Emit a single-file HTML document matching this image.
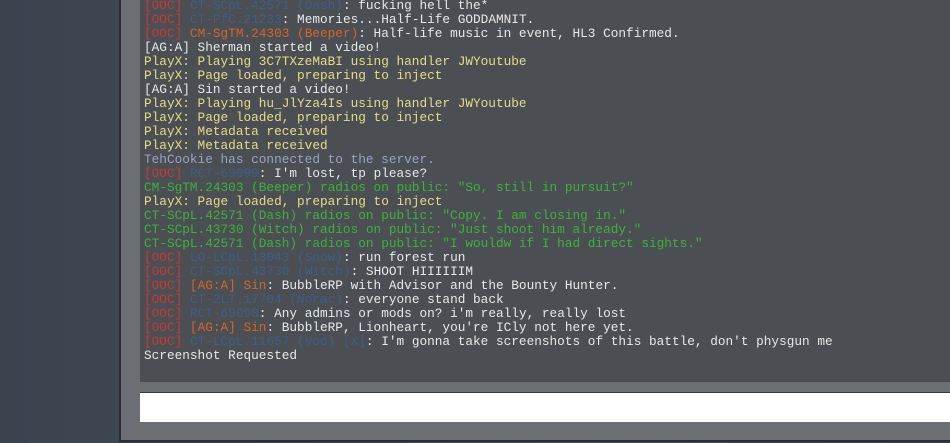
<!DOCTYPE html>
<html><head><style>
body{margin:0;width:950px;height:443px;overflow:hidden;background:#3f4954;position:relative;font-family:"Liberation Mono",monospace;}
.bg{position:absolute;inset:0;background:linear-gradient(90deg,#3a444f,#44505b 60%,#3e4853);}
.panel{position:absolute;left:119px;top:-2px;width:840px;height:440px;background:#6b6f73;border:2px solid #2a2e32;border-right:none;}
.chat{position:absolute;left:140px;top:0;width:810px;height:382px;background:#4b4e52;}
.input{position:absolute;left:140px;top:392px;width:810px;height:29px;background:#fff;border-top:1px solid #3a3a3a;}
.log{position:absolute;left:144px;top:-1px;font-size:12.75px;line-height:14px;white-space:pre;color:#e8e8e8;}
.r{color:#c63b3b}.b{color:#3e5f8a}.o{color:#d4652d}.y{color:#e6dc8a}.g{color:#3db23d}.c{color:#9aa2c6}
</style></head><body>
<div class="bg"></div>
<div class="panel"></div>
<div class="chat"></div>
<div class="input"></div>
<div class="log"><span class="r">[OOC]</span> <span class="b">CT-SCpL.42571 (Dash)</span>: fucking hell the*
<span class="r">[OOC]</span> <span class="b">CT-PfC.21233</span>: Memories...Half-Life GODDAMNIT.
<span class="r">[OOC]</span> <span class="o">CM-SgTM.24303 (Beeper)</span>: Half-life music in event, HL3 Confirmed.
[AG:A] Sherman started a video!
<span class="y">PlayX: Playing 3C7TXzeMaBI using handler JWYoutube</span>
<span class="y">PlayX: Page loaded, preparing to inject</span>
[AG:A] Sin started a video!
<span class="y">PlayX: Playing hu_JlYza4Is using handler JWYoutube</span>
<span class="y">PlayX: Page loaded, preparing to inject</span>
<span class="y">PlayX: Metadata received</span>
<span class="y">PlayX: Metadata received</span>
<span class="c">TehCookie has connected to the server.</span>
<span class="r">[OOC]</span> <span class="b">RCT-69099</span>: I'm lost, tp please?
<span class="g">CM-SgTM.24303 (Beeper) radios on public: "So, still in pursuit?"</span>
<span class="y">PlayX: Page loaded, preparing to inject</span>
<span class="g">CT-SCpL.42571 (Dash) radios on public: "Copy. I am closing in."</span>
<span class="g">CT-SCpL.43730 (Witch) radios on public: "Just shoot him already."</span>
<span class="g">CT-SCpL.42571 (Dash) radios on public: "I wouldw if I had direct sights."</span>
<span class="r">[OOC]</span> <span class="b">LO-LCpL.13043 (Snow)</span>: run forest run
<span class="r">[OOC]</span> <span class="b">CT-SCpL.43730 (Witch)</span>: SHOOT HIIIIIIM
<span class="r">[OOC]</span> <span class="o">[AG:A] Sin</span>: BubbleRP with Advisor and the Bounty Hunter.
<span class="r">[OOC]</span> <span class="b">CT-2LT.17704 (Norac)</span>: everyone stand back
<span class="r">[OOC]</span> <span class="b">RCT-69098</span>: Any admins or mods on? i'm really, really lost
<span class="r">[OOC]</span> <span class="o">[AG:A] Sin</span>: BubbleRP, Lionheart, you're ICly not here yet.
<span class="r">[OOC]</span> <span class="b">CT-LCpL.11657 (Vod) [X]</span>: I'm gonna take screenshots of this battle, don't physgun me
Screenshot Requested</div>
</body></html>
